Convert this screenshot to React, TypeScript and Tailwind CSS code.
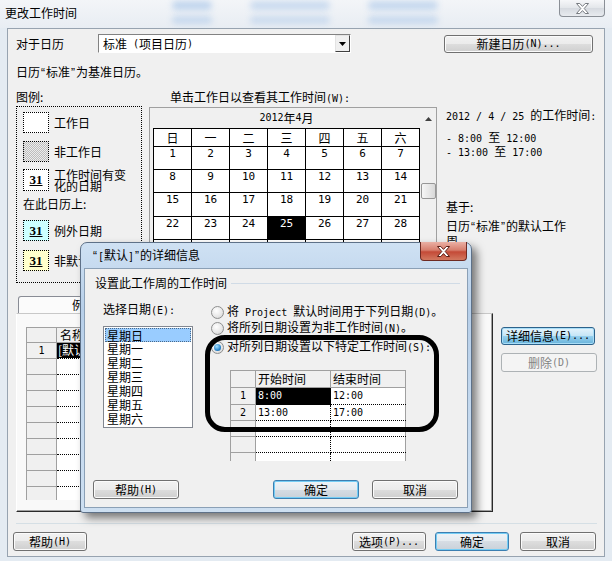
import React from "react";

function T({ s }: { s: string }) {
  const parts = s.match(/[\x20-\x7e]+|[“”]|[^\x20-\x7e“”]+/g) || [];
  return (
    <>
      {parts.map((p, i) =>
        /^[\x20-\x7e]+$/.test(p) ? (
          <span key={i} className="font-['DejaVu_Sans_Mono',monospace] text-[10px] whitespace-pre">
            {p}
          </span>
        ) : p === "“" || p === "”" ? (
          <span key={i} className="px-[1px] font-['Liberation_Sans',sans-serif]">
            {p}
          </span>
        ) : (
          <span key={i}>{p}</span>
        )
      )}
    </>
  );
}

type V = "normal" | "def" | "hot" | "dis";
const BTN: Record<V, string> = {
  normal:
    "border-[#707070] bg-[linear-gradient(#f2f2f2,#ebebeb_50%,#dddddd_50%,#cfcfcf)] shadow-[inset_0_0_0_1px_#fbfbfb] text-black",
  def: "border-[#3c7fb1] bg-[linear-gradient(#eef3f7,#e4eaef_50%,#d6dde4_50%,#c9d1d9)] shadow-[inset_0_0_0_1px_#74cdf5] text-black",
  hot: "border-[#2c628b] bg-[linear-gradient(#e5f4fc,#c4e5f6_50%,#98d1ef_50%,#68b3db)] shadow-[inset_0_0_0_1px_#a8ddf7] text-black",
  dis: "border-[#adb2b5] bg-[#f4f4f4] text-[#838383]",
};

function Btn({ v = "normal", className = "", children }: { v?: V; className?: string; children: React.ReactNode }) {
  return (
    <div className={`flex shrink-0 items-center justify-center rounded-[3px] border ${BTN[v]} ${className}`}>
      {children}
    </div>
  );
}

function XGlyph({ fill, stroke }: { fill: string; stroke: string }) {
  return (
    <svg width="13" height="11" viewBox="0 0 13 11">
      <polygon
        points="0.5,0.5 3.8,0.5 6.5,3.4 9.2,0.5 12.5,0.5 8.2,5.5 12.5,10.5 9.2,10.5 6.5,7.6 3.8,10.5 0.5,10.5 4.8,5.5"
        fill={fill}
        stroke={stroke}
        strokeWidth="1"
        strokeLinejoin="round"
      />
    </svg>
  );
}

function Radio({ checked }: { checked?: boolean }) {
  return (
    <span className="relative inline-block h-[13px] w-[13px] shrink-0 rounded-full border border-[#8e8f8f] bg-[radial-gradient(circle_at_40%_35%,#ffffff,#e6e6e6_60%,#c9c9c9)]">
      {checked && (
        <span className="absolute left-[2px] top-[2px] h-[7px] w-[7px] rounded-full bg-[radial-gradient(circle_at_40%_35%,#a8e2ff,#2a86cc_60%,#0d4e8a)]" />
      )}
    </span>
  );
}

function Legend({ bg, label, num }: { bg: string; label: React.ReactNode; num?: boolean }) {
  return (
    <div className="flex items-center">
      <div className={`flex h-[21px] w-[26px] items-center justify-center border border-dotted border-black ${bg}`}>
        {num && <span className="font-['Liberation_Serif',serif] text-[13px] font-bold underline">31</span>}
      </div>
      <div className="ml-[5px] whitespace-nowrap">{label}</div>
    </div>
  );
}

const weeks = ["日", "一", "二", "三", "四", "五", "六"];
const dates: (number | null)[] = [];
for (let i = 1; i <= 35; i++) dates.push(i <= 30 ? i : null);

export default function App() {
  return (
    <div className="relative h-[561px] w-[612px] overflow-hidden bg-[#e4ebf2] font-['Noto_Sans_CJK_SC',sans-serif] text-[12px] leading-[14px] text-black">
      {/* title bar */}
      <div className="relative flex h-[28px] bg-[linear-gradient(#f3f5f8,#e8edf3)]">
        <div className="absolute left-[172px] top-[1px] h-[9px] w-[40px] rounded-full bg-[#8fb6e4] opacity-50 blur-[3px]" />
        <div className="absolute left-[172px] top-[16px] h-[8px] w-[40px] rounded-full bg-[#8fb6e4] opacity-40 blur-[3px]" />
        <div className="absolute left-[250px] top-[1px] h-[9px] w-[80px] rounded-full bg-[#8fb6e4] opacity-40 blur-[3px]" />
        <div className="absolute left-[250px] top-[16px] h-[8px] w-[80px] rounded-full bg-[#8fb6e4] opacity-35 blur-[3px]" />
        <div className="absolute left-[368px] top-[1px] h-[9px] w-[70px] rounded-full bg-[#8fb6e4] opacity-45 blur-[3px]" />
        <div className="absolute left-[368px] top-[16px] h-[8px] w-[70px] rounded-full bg-[#8fb6e4] opacity-40 blur-[3px]" />
        <div className="relative pl-[5px] pt-[6px]">更改工作时间</div>
        <div className="relative ml-auto mr-[7px] flex h-[17px] w-[46px] items-center justify-center rounded-b-[4px] border border-t-0 border-[#8a8f96] bg-[linear-gradient(#f6f7f9,#e3e6ea_50%,#d5d9df_50%,#e8ebef)]">
          <XGlyph fill="#ffffff" stroke="#777b80" />
        </div>
      </div>

      {/* client */}
      <div className="ml-[7px] flex h-[529px] w-[598px] flex-col border border-[#97a3b0] bg-[#f0f0f0] pl-[8px]">
        {/* row 1 */}
        <div className="mt-[5px] flex h-[19px] items-center">
          <span className="w-[82px]">对于日历</span>
          <div className="flex h-[19px] w-[253px] border border-b-white border-l-[#828282] border-r-white border-t-[#828282]">
            <div className="flex flex-1 items-center bg-white pl-[4px]">
              <T s="标准 (项目日历)" />
            </div>
            <div className="flex w-[15px] items-center justify-center border border-b-[#404040] border-l-[#e3e3e3] border-r-[#404040] border-t-[#e3e3e3] bg-[#f0f0f0]">
              <svg width="7" height="4" viewBox="0 0 7 4">
                <polygon points="0,0 7,0 3.5,4" fill="#000" />
              </svg>
            </div>
          </div>
          <Btn className="ml-[93px] h-[18px] w-[149px]">
            <T s="新建日历(N)..." />
          </Btn>
        </div>

        {/* row 2 */}
        <div className="mt-[12px] h-[14px]">
          <T s="日历“标准”为基准日历。" />
        </div>

        {/* middle */}
        <div className="mt-[11px] flex h-[193px]">
          <div className="w-[126px] shrink-0">
            <div className="h-[14px]">图例:</div>
            <div className="mt-[2px] flex h-[177px] flex-col border border-dotted border-black pl-[6px] pt-[5px]">
              <Legend bg="bg-white" label="工作日" />
              <div className="mt-[8px]">
                <Legend
                  bg="bg-[repeating-conic-gradient(#bdbdbd_0_25%,#ececec_0_50%)] bg-[length:2px_2px]"
                  label="非工作日"
                />
              </div>
              <div className="mt-[7px] flex items-center">
                <div className="flex h-[22px] w-[26px] items-center justify-center border border-dotted border-black bg-white">
                  <span className="font-['Liberation_Serif',serif] text-[13px] font-bold underline">31</span>
                </div>
                <div className="ml-[5px] leading-[11px]">
                  工作时间有变
                  <br />
                  化的日期
                </div>
              </div>
              <div className="mt-[6px] h-[14px]">在此日历上:</div>
              <div className="mt-[9px]">
                <Legend bg="bg-[#ccffff]" num label="例外日期" />
              </div>
              <div className="mt-[9px]">
                <Legend bg="bg-[#ffffcc]" num label="非默认工作周" />
              </div>
            </div>
          </div>

          <div className="ml-[7px] w-[288px] shrink-0">
            <div className="h-[14px] pl-[21px]">
              <T s="单击工作日以查看其工作时间(W):" />
            </div>
            <div className="mt-[3px] flex h-[160px] border border-[#a0a0a0] pl-[3px]">
              <div className="w-[267px]">
                <div className="flex h-[20px] items-center justify-center">
                  <T s="2012" />年<T s="4" />月
                </div>
                <div className="grid grid-cols-[repeat(7,37px)] grid-rows-[17px_22px_22px_23px_22px_22px] gap-px bg-black p-px">
                  {weeks.map((w) => (
                    <div key={w} className="flex items-center justify-center bg-white">
                      {w}
                    </div>
                  ))}
                  {dates.map((d, i) => (
                    <div
                      key={i}
                      className={`text-center font-['DejaVu_Sans_Mono',monospace] text-[11px] leading-[13px] ${
                        d === 25 ? "bg-black text-white" : "bg-white"
                      }`}
                    >
                      {d ?? ""}
                    </div>
                  ))}
                </div>
              </div>
              <div className="flex w-[16px] flex-col items-center">
                <div className="flex h-[22px] items-center justify-center">
                  <svg width="7" height="4" viewBox="0 0 7 4">
                    <polygon points="0,4 3.5,0 7,4" fill="#404040" />
                  </svg>
                </div>
                <div className="mt-[53px] h-[16px] w-[15px] rounded-[2px] border border-[#979797] bg-[linear-gradient(90deg,#f6f6f6,#e8e8e8_50%,#d8d8d8)]" />
              </div>
            </div>
          </div>

          <div className="ml-[9px] flex flex-col whitespace-nowrap">
            <div className="mt-[18px] h-[14px]">
              <T s="2012 / 4 / 25 " />
              的工作时间<T s=":" />
            </div>
            <div className="mt-[9px] leading-[12px]">
              <div>
                <T s="- 8:00 " />至<T s=" 12:00" />
              </div>
              <div>
                <T s="- 13:00 " />至<T s=" 17:00" />
              </div>
            </div>
            <div className="mt-[41px] h-[13px] leading-[13px]">基于:</div>
            <div className="mt-[6px] leading-[13px]">
              <T s="日历“标准”的默认工作" />
              <br />
              周。
            </div>
          </div>
        </div>

        {/* lower */}
        <div className="mt-[13px] flex">
          <div className="w-[477px] shrink-0">
            <div className="flex h-[17px] pl-[2px]">
              <div className="flex w-[156px] items-center justify-center rounded-t-[3px] border border-b-0 border-[#898c95] bg-[#fbfbfb]">
                例外日期
              </div>
              <div className="mt-[2px] flex w-[70px] items-center justify-center rounded-t-[3px] border border-b-0 border-l-0 border-[#898c95] bg-[#e8e8e8]">
                工作周
              </div>
            </div>
            <div className="h-[199px] border border-b-[#2a2a2a] border-l-white border-r-[#2a2a2a] border-t-[#c8c8c8] bg-[#f9f9f9] pl-[9px] pt-[13px] shadow-[inset_-1px_-1px_0_#a0a0a0]">
              <div className="h-[173px] w-[420px] overflow-hidden">
                <div className="flex h-[16px] border-b border-t border-[#a0a0a0]">
                  <div className="w-[31px] border-l border-r border-[#a0a0a0] bg-[#f0f0f0]" />
                  <div className="w-[150px] border-r border-[#a0a0a0] bg-[#f0f0f0] pl-[3px]">名称</div>
                  <div className="w-[110px] border-r border-[#a0a0a0] bg-[#f0f0f0] pl-[3px]">开始时间</div>
                  <div className="w-[110px] border-r border-[#a0a0a0] bg-[#f0f0f0] pl-[3px]">完成时间</div>
                </div>
                {Array.from({ length: 10 }).map((_, i) => (
                  <div key={i} className="flex h-[16px]">
                    <div className="flex w-[31px] items-center justify-center border-b border-l border-r border-[#a0a0a0] bg-[#f0f0f0] font-['DejaVu_Sans_Mono',monospace] text-[10px]">
                      {i === 0 ? "1" : ""}
                    </div>
                    <div className="w-[150px] border-b border-dotted border-black bg-white">
                      {i === 0 && <span className="inline-block h-[15px] bg-black px-[1px] text-white">[默认]</span>}
                    </div>
                    <div className="w-[110px] border-b border-l border-dotted border-black bg-white" />
                    <div className="w-[110px] border-b border-l border-dotted border-black bg-white" />
                  </div>
                ))}
              </div>
            </div>
          </div>
          <div className="ml-[8px] flex flex-col pt-[31px]">
            <Btn v="hot" className="h-[18px] w-[94px]">
              <T s="详细信息(E)..." />
            </Btn>
            <Btn v="dis" className="mt-[8px] h-[19px] w-[96px]">
              <T s="删除(D)" />
            </Btn>
          </div>
        </div>

        <div className="mt-[11px] h-px w-[581px] bg-[#d5dfe5]" />

        <div className="mt-[8px] flex h-[19px]">
          <Btn className="-ml-[3px] w-[74px]">
            <T s="帮助(H)" />
          </Btn>
          <Btn className="ml-[265px] w-[74px]">
            <T s="选项(P)..." />
          </Btn>
          <Btn v="def" className="ml-[9px] w-[74px]">
            确定
          </Btn>
          <Btn className="ml-[11px] w-[76px]">取消</Btn>
        </div>
      </div>

      {/* dialog */}
      <div className="absolute left-[80px] top-[242px] flex h-[271px] w-[392px] flex-col rounded-b-[3px] rounded-t-[7px] border border-[#5e7188] bg-[linear-gradient(180deg,#cfe1f3,#b7cfe9_25%,#c3d8ee_60%,#cddff1)] shadow-[5px_5px_9px_rgba(0,0,0,0.5)]">
        <div className="relative flex h-[25px] items-center pl-[11px]">
          <span>
            <T s="“[默认]”的详细信息" />
          </span>
          <div className="absolute right-[4px] top-[-1px] flex h-[19px] w-[47px] items-center justify-center rounded-b-[4px] border border-t-0 border-[#6e2a22] bg-[linear-gradient(#eab0a4,#d77e6d_45%,#c44a37_55%,#d2785f)]">
            <XGlyph fill="#ffffff" stroke="#5a1d14" />
          </div>
        </div>
        <div className="mx-[3px] flex h-[240px] flex-col border border-[#8ba0b6] bg-[#f0f0f0]">
          <div className="mt-[7px] flex h-[14px] items-center pl-[10px]">
            <span>设置此工作周的工作时间</span>
            <div className="ml-[4px] mr-[7px] h-px flex-1 bg-[#d0dbe6]" />
          </div>
          <div className="mt-[12px] flex">
            <div className="w-[108px] shrink-0 pl-[18px]">
              <div className="h-[14px]">
                <T s="选择日期(E):" />
              </div>
              <div className="mt-[10px] h-[102px] w-[90px] border border-[#828790] bg-white pl-px pr-px pt-px">
                {["星期日", "星期一", "星期二", "星期三", "星期四", "星期五", "星期六"].map((d, i) => (
                  <div
                    key={d}
                    className={`h-[14px] pl-[2px] leading-[14px] ${
                      i === 0 ? "border border-dotted border-[#4a6a8a] bg-[#99ccff] pl-px leading-[12px]" : ""
                    }`}
                  >
                    {d}
                  </div>
                ))}
              </div>
            </div>
            <div className="ml-[18px] flex flex-col pt-[2px]">
              <div className="flex h-[16px] items-center">
                <Radio />
                <span className="ml-[3px]">
                  <T s="将 Project 默认时间用于下列日期(D)" />。
                </span>
              </div>
              <div className="flex h-[16px] items-center">
                <Radio />
                <span className="ml-[3px]">
                  将所列日期设置为非工作时间<T s="(N)" />。
                </span>
              </div>
              <div className="mt-[3px] flex h-[16px] items-center">
                <Radio checked />
                <span className="ml-[3px]">
                  对所列日期设置以下特定工作时间<T s="(S):" />
                </span>
              </div>
              <div className="ml-[19px] mt-[15px] h-[91px] w-[176px] overflow-hidden">
                <div className="flex h-[18px] border-t border-[#a0a0a0]">
                  <div className="w-[26px] border-b border-l border-r border-[#a0a0a0] bg-[#f0f0f0]" />
                  <div className="w-[75px] border-b border-r border-[#a0a0a0] bg-[#f0f0f0] pl-[2px] leading-[16px]">
                    开始时间
                  </div>
                  <div className="w-[75px] border-b border-r border-[#a0a0a0] bg-[#f0f0f0] pl-[2px] leading-[16px]">
                    结束时间
                  </div>
                </div>
                {[
                  ["1", "8:00", "12:00"],
                  ["2", "13:00", "17:00"],
                  ["", "", ""],
                  ["", "", ""],
                  ["", "", ""],
                ].map((r, i) => (
                  <div key={i} className={`flex ${i === 0 ? "h-[17px]" : "h-[16px]"}`}>
                    <div className="flex w-[26px] items-center justify-center border-b border-l border-r border-[#a0a0a0] bg-[#f0f0f0] font-['DejaVu_Sans_Mono',monospace] text-[10px]">
                      {r[0]}
                    </div>
                    <div
                      className={`flex w-[75px] items-center border-b border-r border-dotted border-black pl-[2px] font-['DejaVu_Sans_Mono',monospace] text-[10px] ${
                        i === 0 ? "bg-black text-white" : "bg-white"
                      }`}
                    >
                      {r[1]}
                    </div>
                    <div className="flex w-[75px] items-center border-b border-dotted border-black bg-white pl-[2px] font-['DejaVu_Sans_Mono',monospace] text-[10px] shadow-[inset_-1px_0_0_#a0a0a0]">
                      {r[2]}
                    </div>
                  </div>
                ))}
              </div>
            </div>
          </div>
          <div className="mb-[8px] mt-auto flex h-[19px] pl-[8px]">
            <Btn className="w-[86px]">
              <T s="帮助(H)" />
            </Btn>
            <Btn v="def" className="ml-[94px] w-[86px]">
              确定
            </Btn>
            <Btn className="ml-[13px] w-[86px]">取消</Btn>
          </div>
        </div>
        {/* annotation */}
        <div className="absolute left-[124px] top-[92px] h-[97px] w-[234px] rounded-[20px] border-[5px] border-black" />
      </div>
    </div>
  );
}
